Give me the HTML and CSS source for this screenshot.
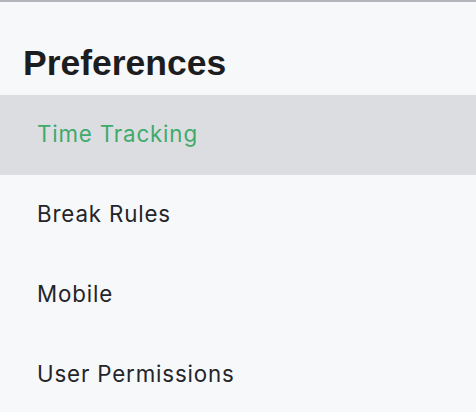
FILE: index.html
```html
<!DOCTYPE html>
<html>
<head>
<meta charset="utf-8">
<link rel="stylesheet" href="styles.css">
</head>
<body>
<div class="panel">
  <h1 class="title">Preferences</h1>
  <ul class="menu">
    <li class="item active">Time Tracking</li>
    <li class="item">Break Rules</li>
    <li class="item">Mobile</li>
    <li class="item">User Permissions</li>
  </ul>
</div>
</body>
</html>
```
FILE: styles.css
```css
html, body {
  margin: 0;
  padding: 0;
  background: #f7f8fa;
}
.panel {
  border-top: 2px solid #b3b5bb;
  height: 410px;
  overflow: hidden;
  font-family: "Inter", "Liberation Sans", sans-serif;
}
.title {
  margin: 0;
  padding: 41px 0 0 23px;
  height: 52px;
  font-family: "Liberation Sans", Arial, sans-serif;
  font-weight: 700;
  font-size: 35.5px;
  line-height: 40px;
  color: #1c1d20;
  box-sizing: content-box;
}
.menu {
  list-style: none;
  margin: 0;
  padding: 0;
}
.item {
  height: 80px;
  box-sizing: border-box;
  padding: 0 0 4px 37px;
  display: flex;
  align-items: center;
  font-size: 22.3px;
  letter-spacing: 0.85px;
  color: #24252a;
}
.item.active {
  background: #dcdde0;
  color: #3faa6b;
}
```
